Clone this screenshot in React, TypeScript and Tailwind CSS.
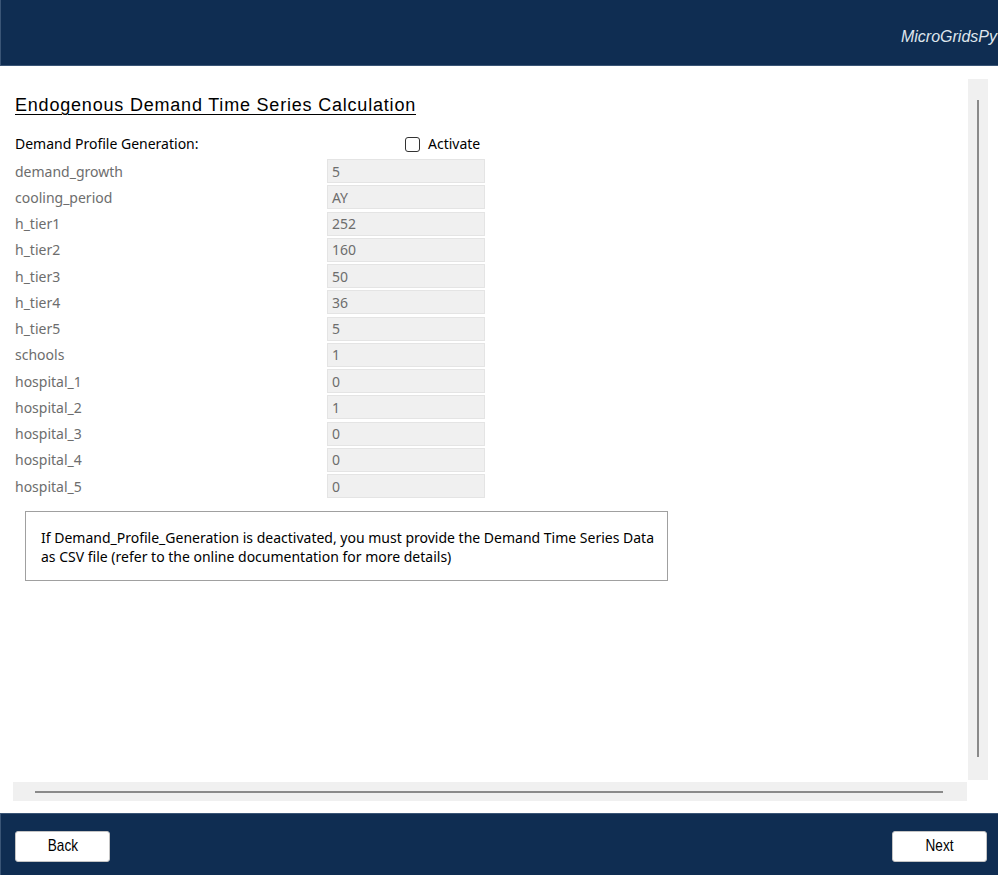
import React from "react";

const FIELDS: { name: string; value: string }[] = [
  { name: "demand_growth", value: "5" },
  { name: "cooling_period", value: "AY" },
  { name: "h_tier1", value: "252" },
  { name: "h_tier2", value: "160" },
  { name: "h_tier3", value: "50" },
  { name: "h_tier4", value: "36" },
  { name: "h_tier5", value: "5" },
  { name: "schools", value: "1" },
  { name: "hospital_1", value: "0" },
  { name: "hospital_2", value: "1" },
  { name: "hospital_3", value: "0" },
  { name: "hospital_4", value: "0" },
  { name: "hospital_5", value: "0" },
];

const ui = { fontFamily: '"Noto Sans", "Open Sans", sans-serif' };
const arial = { fontFamily: '"Liberation Sans", Arial, sans-serif' };

export default function App() {
  return (
    <div className="flex h-[875px] w-[998px] flex-col overflow-hidden bg-white">
      <header className="flex h-[66px] shrink-0 items-start justify-end border-b border-l border-[#3a5576] bg-[#0f2d52]">
        <span
          className="mt-[28px] pr-[1px] text-[16px] italic leading-[18px] text-[#dfe5ec]"
          style={arial}
        >
          MicroGridsPy
        </span>
      </header>

      <div className="grid flex-1 grid-cols-[954px_20px] grid-rows-[701px_19px] gap-x-[1px] gap-y-[2px] pl-[13px] pr-[11px] pt-[13px]">
        <div className="overflow-hidden pl-[2px] pt-[16px]">
          <h1
            className="text-[18px] leading-[21px] tracking-[0.8px] text-black underline decoration-1 underline-offset-[3px]"
            style={arial}
          >
            Endogenous Demand Time Series Calculation
          </h1>

          <div className="mt-[15px] w-[470px]" style={ui}>
            <div className="flex h-[27px] items-start pt-[3px] text-[14px] leading-[20px] text-black">
              <span className="w-[390px]">Demand Profile Generation:</span>
              <span className="mt-[3px] h-[15px] w-[15px] rounded-[3px] border border-[#333333] bg-white" />
              <span className="ml-[8px]">Activate</span>
            </div>
            {FIELDS.map((f) => (
              <div key={f.name} className="flex h-[26.25px] items-center text-[14px] text-[#6d6d6d]">
                <span className="w-[312px]">{f.name}</span>
                <div className="flex h-[24px] w-[158px] items-center border border-[#e4e4e4] bg-[#f0f0f0] pl-[4px]">
                  {f.value}
                </div>
              </div>
            ))}
          </div>

          <div
            className="ml-[10px] mt-[12px] flex h-[70px] w-[643px] flex-col justify-center border border-[#a0a0a0] pl-[15px] pt-[2px] text-[14px] leading-[19px] text-black"
            style={ui}
          >
            <p>If Demand_Profile_Generation is deactivated, you must provide the Demand Time Series Data</p>
            <p>as CSV file (refer to the online documentation for more details)</p>
          </div>
        </div>

        <div className="flex justify-center bg-[#f0f0f0] pb-[23px] pt-[21px]">
          <div className="w-[2px] bg-[#8a8a8a]" />
        </div>

        <div className="flex items-center bg-[#f0f0f0] pl-[22px] pr-[24px]">
          <div className="h-[2px] flex-1 bg-[#8a8a8a]" />
        </div>
        <div />
      </div>

      <footer className="mt-[12px] flex h-[62px] shrink-0 items-center justify-between border-l border-t border-[#3a5576] bg-[#0f2d52] pl-[14px] pr-[11px] pt-[3px]">
        <FooterButton label="Back" />
        <FooterButton label="Next" />
      </footer>
    </div>
  );
}

function FooterButton({ label }: { label: string }) {
  return (
    <button
      className="flex h-[31px] w-[95px] items-center justify-center rounded-[3px] border border-[#c4c4c4] bg-white text-[17px] text-black"
      style={arial}
    >
      <span className="inline-block scale-x-[0.8]">{label}</span>
    </button>
  );
}
